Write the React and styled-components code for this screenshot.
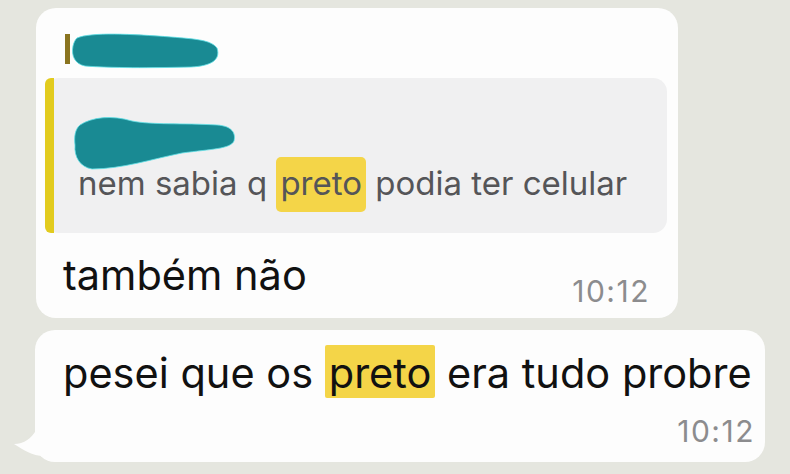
import React from 'react'
import styled, { createGlobalStyle } from 'styled-components'

const GlobalStyle = createGlobalStyle`
  html, body {
    margin: 0;
    padding: 0;
    background: #e5e6df;
  }
  body {
    font-family: Inter, "Noto Sans", sans-serif;
    -webkit-font-smoothing: antialiased;
  }
`

const Chat = styled.div`
  width: 790px;
  height: 474px;
  box-sizing: border-box;
  padding: 8px 0 0 35px;
  display: flex;
  flex-direction: column;
  gap: 12px;
  overflow: hidden;
`

const Bubble = styled.div`
  position: relative;
  box-sizing: border-box;
  width: ${props => props.width}px;
  background: #fdfdfd;
  border-radius: 20px;
`

const ReplyBubble = styled(Bubble)`
  margin-left: 1px;
  height: 310px;
  padding: 14px 11px 0 9px;
  display: flex;
  flex-direction: column;
`

const NameRow = styled.div`
  height: 56px;
  padding: 6px 0 0 20px;
  box-sizing: border-box;
  display: flex;
  align-items: flex-start;
`

const Scribble = styled.svg`
  display: block;
  flex: none;
  margin-left: ${props => props.$shift || 0}px;
`

const Quote = styled.div`
  position: relative;
  height: 155px;
  box-sizing: border-box;
  background: #f0f0f1;
  border-radius: 14px;
  padding: 35px 0 0 33px;
  display: flex;
  flex-direction: column;
`

const QuoteBar = styled.div`
  position: absolute;
  left: 0;
  top: 0;
  bottom: 0;
  width: 9px;
  background: #e2cb1e;
  border-radius: 6px 0 0 6px;
`

const QuoteText = styled.div`
  margin-top: -16px;
  font-size: 33px;
  line-height: 56px;
  color: #555558;
  white-space: nowrap;
`

const Mark = styled.span`
  background: #f4d548;
  border-radius: ${props => props.radius}px;
  padding: ${props => props.pad};
  color: inherit;
`

const Footer = styled.div`
  flex: 1;
  display: flex;
  justify-content: space-between;
  align-items: flex-start;
  padding: 18px 17px 0 18px;
`

const MessageText = styled.div`
  font-size: 41.5px;
  line-height: 48px;
  color: #111;
  white-space: nowrap;
`

const Time = styled.div`
  font-size: 30px;
  line-height: 36px;
  color: #8c8c8e;
  letter-spacing: 1.5px;
  margin-top: ${props => props.top}px;
`

const PlainBubble = styled(Bubble)`
  height: 132px;
  padding: 19px 10px 0 28px;
  display: flex;
  flex-direction: column;
  align-items: stretch;

  &::before {
    content: '';
    position: absolute;
    left: -21px;
    bottom: 6px;
    width: 40px;
    height: 26px;
    background: #fdfdfd;
    clip-path: path('M0 14 C10 14 18 8 22 0 L40 0 L40 26 L30 26 C18 26 10 20 0 14 Z');
  }
`

const TimeRow = styled.div`
  display: flex;
  justify-content: flex-end;
`

function Blob({ width, height, d, shift }) {
  return (
    <Scribble $shift={shift} width={width} height={height} viewBox={`0 0 ${width} ${height}`}>
      <path d={d} fill="#198a93" stroke="#5ee0e6" strokeWidth="0.8" />
    </Scribble>
  )
}

function App() {
  return (
    <>
      <GlobalStyle />
      <Chat>
        <ReplyBubble width={642}>
          <NameRow>
            <Scribble width={6} height={32} style={{ marginTop: 6 }}>
              <rect x="0" y="0" width="5" height="30" fill="#8a7420" />
            </Scribble>
            <Blob
              width={150}
              height={42}
              d="M6 10 C20 4 60 6 100 9 C125 11 140 12 146 20 C150 32 140 38 120 39 C80 40 40 40 14 38 C4 36 0 28 2 18 C3 14 4 12 6 10 Z"
            />
          </NameRow>
          <Quote>
            <QuoteBar />
            <Blob
              shift={-6}
              width={165}
              height={58}
              d="M8 12 C20 4 40 2 60 8 C80 12 110 10 145 12 C160 13 164 20 162 28 C158 36 140 36 110 40 C80 46 50 56 20 56 C8 54 2 44 3 32 C2 24 3 16 8 12 Z"
            />
            <QuoteText>
              nem sabia q <Mark radius={5} pad="6px 4px 9px">preto</Mark> podia ter celular
            </QuoteText>
          </Quote>
          <Footer>
            <MessageText>também não</MessageText>
            <Time top={22}>10:12</Time>
          </Footer>
        </ReplyBubble>
        <PlainBubble width={730}>
          <MessageText>
            pesei que os <Mark radius={2} pad="3px 4px 0">preto</Mark> era tudo probre
          </MessageText>
          <TimeRow>
            <Time top={16}>10:12</Time>
          </TimeRow>
        </PlainBubble>
      </Chat>
    </>
  )
}

export default App
